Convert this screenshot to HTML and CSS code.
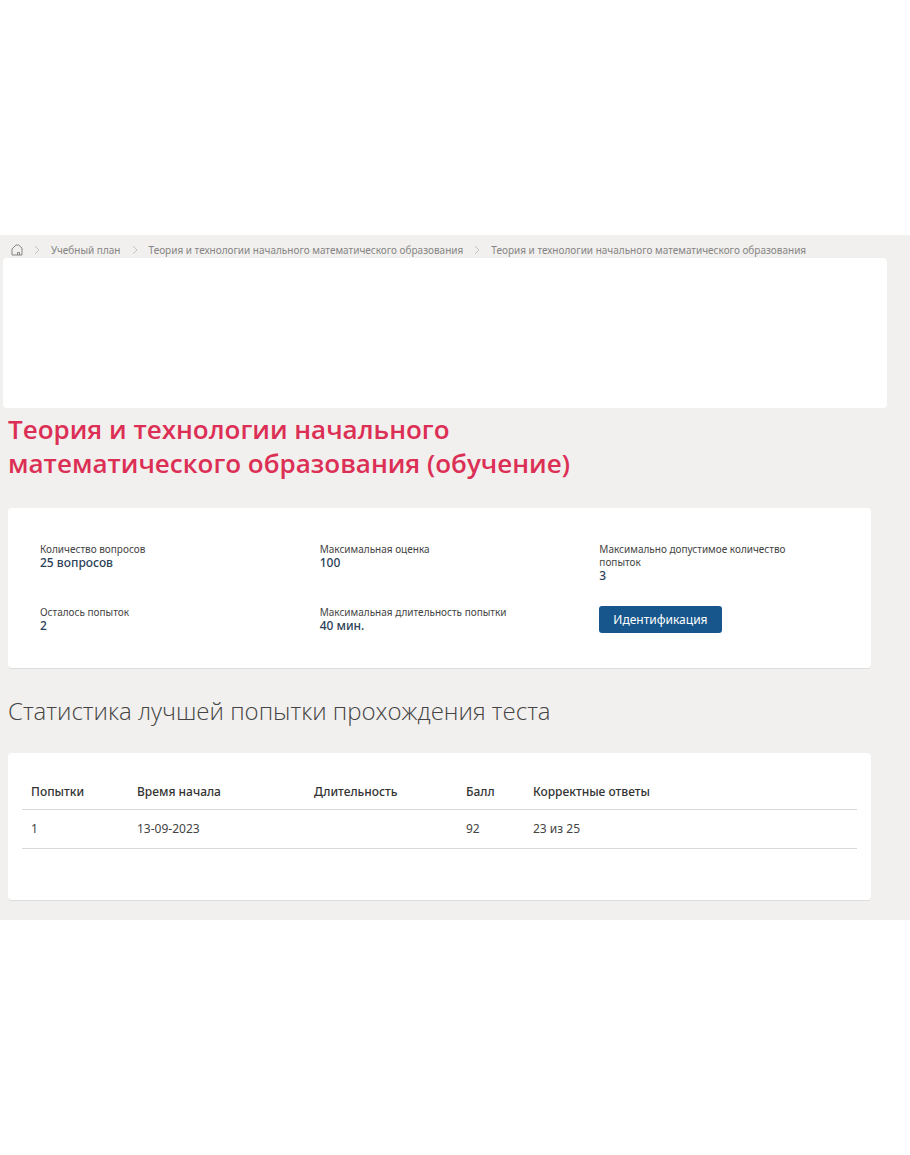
FILE: index.html
```html
<!DOCTYPE html>
<html lang="ru">
<head>
    <meta charset="UTF-8">
    <meta name="viewport" content="width=device-width, initial-scale=1.0">
    <title>Теория и технологии начального математического образования</title>
    <link rel="stylesheet" href="styles.css">
</head>
<body>
    <main class="page">
        <nav class="breadcrumbs">
            <a href="#" class="home" aria-label="Главная">
                <svg width="12" height="12" viewBox="0 0 12 12" fill="none" stroke="currentColor">
                    <path d="M1 11 V5 L5 1 H7.5 L11 4 V11 Z"/>
                    <path d="M6.5 11 V8.5 H8.5 V11"/>
                </svg>
            </a>
            <svg class="arrow" width="6" height="10" viewBox="0 0 6 10" fill="none" stroke="currentColor"><path d="M1 1 L5 5 L1 9"/></svg>
            <a href="#">Учебный план</a>
            <svg class="arrow" width="6" height="10" viewBox="0 0 6 10" fill="none" stroke="currentColor"><path d="M1 1 L5 5 L1 9"/></svg>
            <a href="#">Теория и технологии начального математического образования</a>
            <svg class="arrow" width="6" height="10" viewBox="0 0 6 10" fill="none" stroke="currentColor"><path d="M1 1 L5 5 L1 9"/></svg>
            <a href="#">Теория и технологии начального математического образования</a>
        </nav>
        <div class="banner"></div>
        <div class="content">
            <h1>Теория и технологии начального математического образования (обучение)</h1>
            <section class="card info">
                <div class="info-item">
                    <div class="label">Количество вопросов</div>
                    <div class="value">25 вопросов</div>
                </div>
                <div class="info-item">
                    <div class="label">Максимальная оценка</div>
                    <div class="value">100</div>
                </div>
                <div class="info-item">
                    <div class="label">Максимально допустимое количество попыток</div>
                    <div class="value">3</div>
                </div>
                <div class="info-item">
                    <div class="label">Осталось попыток</div>
                    <div class="value">2</div>
                </div>
                <div class="info-item">
                    <div class="label">Максимальная длительность попытки</div>
                    <div class="value">40 мин.</div>
                </div>
                <div class="info-item">
                    <button type="button">Идентификация</button>
                </div>
            </section>
            <h2>Статистика лучшей попытки прохождения теста</h2>
            <section class="card stats">
                <table>
                    <thead>
                        <tr>
                            <th class="col-try">Попытки</th>
                            <th class="col-start">Время начала</th>
                            <th class="col-time">Длительность</th>
                            <th class="col-score">Балл</th>
                            <th>Корректные ответы</th>
                        </tr>
                    </thead>
                    <tbody>
                        <tr>
                            <td>1</td>
                            <td>13-09-2023</td>
                            <td></td>
                            <td>92</td>
                            <td>23 из 25</td>
                        </tr>
                    </tbody>
                </table>
            </section>
        </div>
    </main>
</body>
</html>
```

FILE: styles.css
```css
body {
    margin: 0;
    padding: 235px 0;
    background-color: #fff;
    color: #444;
    font-family: "Noto Sans", "Open Sans", sans-serif;
    font-size: 12px;
}
.page {
    background-color: #f2f0ee;
    padding-bottom: 19px;
}
.breadcrumbs {
    display: flex;
    align-items: center;
    gap: 11px;
    padding: 7px 11px 0;
    font-size: 10px;
    line-height: 16px;
    color: #858585;
    white-space: nowrap;
}
.breadcrumbs a {
    color: inherit;
    text-decoration: none;
}
.home {
    display: flex;
}
.arrow {
    color: #c4c4c4;
}
.banner {
    height: 150px;
    margin: 0 23px 0 3px;
    background-color: #fff;
    border-radius: 4px;
}
.content {
    padding: 0 39px 0 8px;
}
h1, h2 {
    font-family: "Open Sans", "Noto Sans", sans-serif;
    line-height: 34px;
}
h1 {
    max-width: 620px;
    margin: 4px 0 28px;
    color: #dc2f55;
    font-size: 26px;
    font-weight: 600;
}
h2 {
    margin: 25px 0;
    color: #444;
    font-size: 24px;
    font-weight: 300;
}
.card {
    background-color: #fff;
    border-bottom: 1px solid #dcdcdc;
    border-radius: 4px;
}
.info {
    display: grid;
    grid-template-columns: repeat(3, 1fr);
    gap: 23px 40px;
    padding: 35px 32px;
}
.label {
    max-width: 220px;
    font-size: 10px;
    line-height: 13px;
}
.value {
    color: #2c4258;
    font-weight: 500;
    line-height: 14px;
}
button {
    padding: 0 14px;
    border: none;
    border-radius: 3px;
    background-color: #17568c;
    color: #fff;
    font-family: inherit;
    font-size: 12px;
    line-height: 27px;
    cursor: pointer;
}
button:hover {
    background-color: #12466f;
}
.stats {
    padding: 20px 14px 51px;
}
table {
    width: 100%;
    border-collapse: collapse;
    table-layout: fixed;
}
th, td {
    padding: 10px 9px;
    border-bottom: 1px solid #d9d9d9;
    text-align: left;
    line-height: 18px;
}
th {
    padding-bottom: 8px;
    color: #333;
    font-weight: 500;
}
.col-try {
    width: 88px;
}
.col-start {
    width: 159px;
}
.col-time {
    width: 134px;
}
.col-score {
    width: 49px;
}
```
